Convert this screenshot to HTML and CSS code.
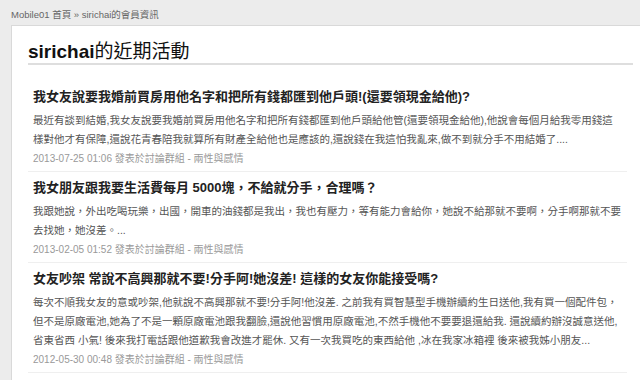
FILE: index.html
```html
<!DOCTYPE html>
<html lang="zh-Hant">
<head>
<meta charset="utf-8">
<title>sirichai的會員資訊</title>
<link rel="stylesheet" href="styles.css">
</head>
<body>
<div class="crumb">Mobile01 首頁 » sirichai的會員資訊</div>
<div class="panel">
  <h1 class="heading"><span class="hname">sirichai</span>的近期活動</h1>
  <ul class="list">
    <li class="item">
      <div class="title">我女友說要我婚前買房用他名字和把所有錢都匯到他戶頭!(還要領現金給他)?</div>
      <div class="desc"><span class="ln">最近有談到結婚,我女友說要我婚前買房用他名字和把所有錢都匯到他戶頭給他管(還要領現金給他),他說會每個月給我零用錢這</span><span class="ln">樣對他才有保障,還說花青春陪我就算所有財產全給他也是應該的,還說錢在我這怕我亂來,做不到就分手不用結婚了....</span></div>
      <div class="meta">2013-07-25 01:06 發表於討論群組 - 兩性與感情</div>
    </li>
    <li class="item">
      <div class="title">我女朋友跟我要生活費每月 5000塊，不給就分手，合理嗎？</div>
      <div class="desc"><span class="ln">我跟她說，外出吃喝玩樂，出國，開車的油錢都是我出，我也有壓力，等有能力會給你，她說不給那就不要啊，分手啊那就不要</span><span class="ln">去找她，她沒差。...</span></div>
      <div class="meta">2013-02-05 01:52 發表於討論群組 - 兩性與感情</div>
    </li>
    <li class="item">
      <div class="title">女友吵架 常說不高興那就不要!分手阿!她沒差! 這樣的女友你能接受嗎?</div>
      <div class="desc"><span class="ln">每次不順我女友的意或吵架,他就說不高興那就不要!分手阿!他沒差. 之前我有買智慧型手機辦續約生日送他,我有買一個配件包，</span><span class="ln">但不是原廠電池,她為了不是一顆原廠電池跟我翻臉,還說他習慣用原廠電池,不然手機他不要要退還給我. 還說續約辦沒誠意送他,</span><span class="ln">省東省西 小氣! 後來我打電話跟他道歉我會改進才罷休. 又有一次我買吃的東西給他 ,冰在我家冰箱裡 後來被我姊小朋友...</span></div>
      <div class="meta">2012-05-30 00:48 發表於討論群組 - 兩性與感情</div>
    </li>
  </ul>
</div>
</body>
</html>
```

FILE: styles.css
```css
html, body {
  margin: 0;
  padding: 0;
  overflow: hidden;
  background: #ececec;
}
body {
  font-family: "Liberation Sans", "Noto Sans CJK TC", sans-serif;
  width: 640px;
  height: 380px;
}
.crumb {
  padding: 8px 11px 3px;
  font-size: 9.5px;
  line-height: 14px;
  color: #666;
}
.panel {
  margin-left: 11px;
  width: 605px;
  padding: 14px 7px 7px 16px;
  background: #fff;
  border-top: 1px solid #d9d9d9;
  border-left: 1px solid #d9d9d9;
}
.heading {
  margin: 0 0 16px;
  font-size: 19px;
  line-height: 23px;
  font-weight: normal;
  color: #111;
  border-bottom: 2px solid #dedede;
}
.hname {
  font-weight: bold;
}
.list {
  list-style: none;
  margin: 0 6px 0 0;
  padding: 0;
}
.item {
  padding: 6px 0 2px 5px;
  border-bottom: 1px solid #efefef;
}
.title {
  font-size: 13px;
  line-height: 20px;
  font-weight: bold;
  color: #222;
  margin-bottom: 4px;
  white-space: nowrap;
}
.desc {
  font-size: 10.5px;
  line-height: 19px;
  color: #555;
}
.ln {
  display: block;
  white-space: nowrap;
}
.meta {
  font-size: 10px;
  line-height: 20px;
  color: #999;
}
```
